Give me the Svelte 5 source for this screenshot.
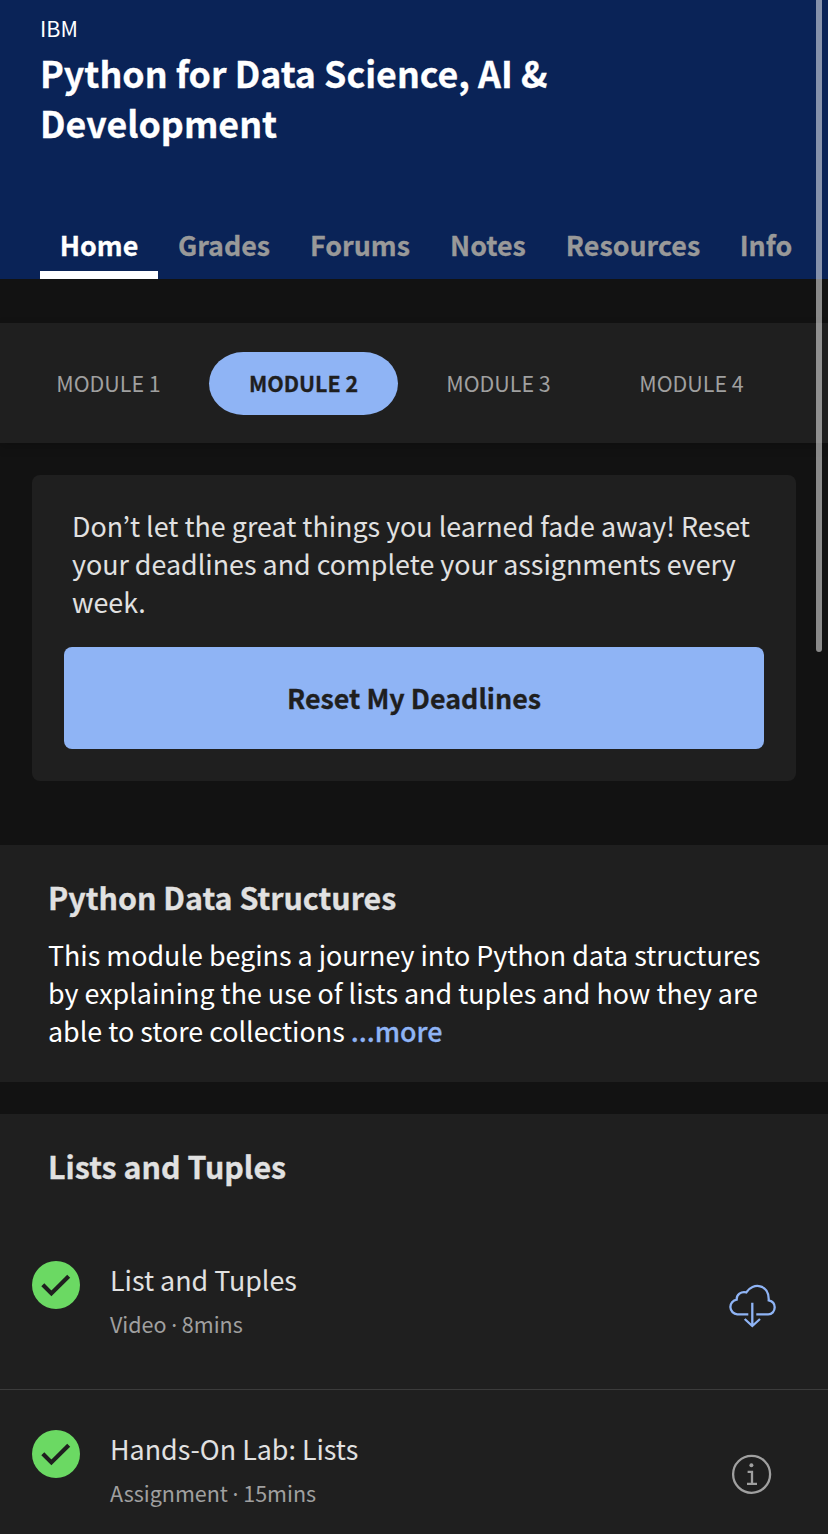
<script>
  const tabs = [
    { label: 'Home', width: 118 },
    { label: 'Grades', width: 132 },
    { label: 'Forums', width: 140 },
    { label: 'Notes', width: 116 },
    { label: 'Resources', width: 174 },
    { label: 'Info', width: 92 }
  ];
  const modules = ['MODULE 1', 'MODULE 2', 'MODULE 3', 'MODULE 4'];
  const items = [
    { title: 'List and Tuples', meta: 'Video · 8mins', icon: 'cloud' },
    { title: 'Hands-On Lab: Lists', meta: 'Assignment · 15mins', icon: 'info' }
  ];
  let tab = $state('Home');
  let current = $state('MODULE 2');
</script>

<main>
  <header>
    <div class="org">IBM</div>
    <h1>Python for Data Science, AI &amp;<br />Development</h1>
    <nav>
      {#each tabs as t}
        <button class="tab" class:active={tab === t.label} style:width="{t.width}px" onclick={() => (tab = t.label)}>{t.label}</button>
      {/each}
    </nav>
  </header>

  <div class="modules">
    {#each modules as m}
      <button class="module" class:active={current === m} onclick={() => (current = m)}>{m}</button>
    {/each}
  </div>

  <section class="card">
    <p>Don’t let the great things you learned fade away! Reset<br />your deadlines and complete your assignments every<br />week.</p>
    <button class="reset">Reset My Deadlines</button>
  </section>

  <section class="about">
    <h2>Python Data Structures</h2>
    <p>This module begins a journey into Python data structures<br />by explaining the use of lists and tuples and how they are<br />able to store collections <span class="more">...more</span></p>
  </section>

  <section class="lessons">
    <h2>Lists and Tuples</h2>
    {#each items as item}
      <article>
        <svg class="check" width="48" height="48" viewBox="0 0 48 48">
          <circle cx="24" cy="24" r="24" fill="#6bd963" />
          <path d="M10.800 23.800L19.400 32.400L36.700 15.300" fill="none" stroke="#1f1f1f" stroke-width="4.200" />
        </svg>
        <div class="info">
          <div class="title">{item.title}</div>
          <div class="meta">{item.meta}</div>
        </div>
        {#if item.icon === 'cloud'}
          <svg class="action" width="48" height="44" viewBox="0 0 48 44" fill="none" stroke="#8fb4f5" stroke-width="2.3">
            <path d="M20.300 30.300H9.300A7.400 7.400 0 0 1 8.700 15.600C8.400 10.500 13 7.200 18.300 8.400C24.500 -1.800 41.500 -.3 40.700 16.300C43.800 17 46.700 19.500 46.700 23.300C46.700 27.500 43.800 30.300 40.300 30.300H28.300M24.300 18.700V42M16.700 35L24.300 42L32 35" />
          </svg>
        {:else}
          <svg class="action" width="48" height="44" viewBox="0 0 48 44" fill="none" stroke="#a0a0a0" stroke-width="2.3">
            <circle cx="23.600" cy="21.300" r="18.500" />
            <path d="M19.600 18.800H24V30.800M19 30.800H29" />
            <circle cx="23.400" cy="12.200" r="2" fill="#a0a0a0" stroke="none" />
          </svg>
        {/if}
      </article>
    {/each}
  </section>
  <div class="scrollbar"></div>
</main>

<style>
  :global(body) { background: #121212; }
  main, button { font-family: 'Noto Sans CJK KR', sans-serif; }
  main { position: relative; width: 828px; height: 1534px; overflow: hidden; background: #121212; color: #e1e1e1; }
  h1, h2, p { margin: 0; white-space: nowrap; }
  h1, h2, .tab, .reset, .module.active { -webkit-text-stroke: .3px currentColor; }
  button { border: 0; padding: 0; background: none; }
  header { box-sizing: border-box; height: 279px; padding: 13px 0 0 40px; background: #0a2357; color: #fff; display: flex; flex-direction: column; }
  .org { font-size: 21.5px; line-height: 30px; }
  h1 { font-size: 35.75px; line-height: 50px; margin-top: 5px; }
  nav { display: flex; margin-top: auto; }
  .tab { box-sizing: border-box; flex: none; height: 65px; border-bottom: 8px solid transparent; padding-top: 4px; font-size: 26.85px; font-weight: 700; line-height: 53px; color: #999; }
  .tab.active { color: #fff; border-color: #fff; }
  .modules { box-sizing: border-box; height: 120px; margin-top: 44px; padding-left: 16px; display: flex; align-items: center; gap: 8px; background: #1f1f1f; box-shadow: 0 4px 10px rgba(0, 0, 0, .18); }
  .module { width: 185px; height: 63px; padding-bottom: 2px; font-size: 21.45px; color: #a0a0a0; }
  .module.active { width: 189px; border-radius: 35px / 32px; background: #8fb4f5; color: #1f1f1f; font-weight: 700; }
  .card { box-sizing: border-box; width: 764px; height: 306px; margin: 32px 32px 0; padding: 32px 32px 32px; border-radius: 8px; background: #1f1f1f; }
  p { font-size: 26.85px; line-height: 38px; }
  .card p { padding-left: 8px; }
  .reset { display: block; width: 700px; height: 102px; margin-top: 26px; padding-bottom: 2px; border-radius: 8px; background: #8fb4f5; color: #1f1f1f; font-size: 26.85px; font-weight: 700; }
  .about { box-sizing: border-box; height: 237px; margin-top: 64px; padding: 32px 48px; background: #1f1f1f; }
  h2 { font-size: 30.4px; line-height: 40px; }
  .about p { margin-top: 19px; color: #fff; }
  .more { color: #8fb4f5; font-weight: 500; -webkit-text-stroke: .3px currentColor; }
  .lessons { height: 420px; margin-top: 32px; background: #1f1f1f; }
  .lessons h2 { height: 75px; padding: 32px 48px 0; }
  article { display: flex; align-items: flex-start; box-sizing: border-box; height: 169px; padding: 40px 52px 0 32px; border-bottom: 1px solid #3b3b3b; }
  .info { flex: 1; margin-left: 30px; }
  .title { font-size: 26.85px; line-height: 40px; margin-top: -1px; }
  .meta { font-size: 21.5px; line-height: 30px; margin-top: 9px; color: #a0a0a0; word-spacing: -3.2px; }
  .action { margin-top: 23px; }
  .scrollbar { position: absolute; right: 6px; top: -10px; width: 6px; height: 662px; border-radius: 3px; background: rgba(255, 255, 255, .5); }
</style>
